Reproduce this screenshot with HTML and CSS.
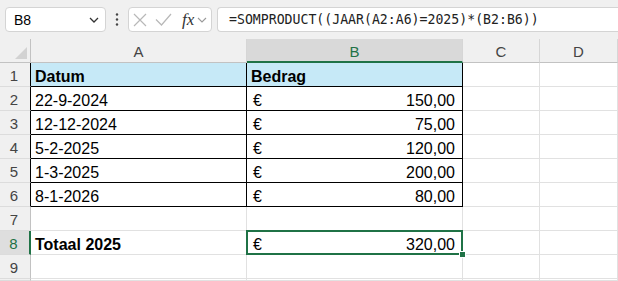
FILE: index.html
```html
<!DOCTYPE html>
<html lang="nl">

<head>
  <meta charset="UTF-8">
  <meta name="viewport" content="width=device-width, initial-scale=1.0">
  <title>SOMPRODUCT</title>
  <link rel="stylesheet" href="styles.css">
</head>

<body>
  <div class="toolbar">
    <div class="namebox">
      <span>B8</span>
      <svg width="10" height="6" viewBox="0 0 10 6"><path d="M1 1l4 4 4-4" fill="none" stroke="#333" stroke-width="1.3"/></svg>
    </div>
    <div class="dots">
      <svg width="4" height="13" viewBox="0 0 4 13"><circle cx="2" cy="1.5" r="1.2" fill="#444"/><circle cx="2" cy="6.5" r="1.2" fill="#444"/><circle cx="2" cy="11.5" r="1.2" fill="#444"/></svg>
    </div>
    <div class="fxbox">
      <svg class="ic-x" width="14" height="14" viewBox="0 0 14 14"><path d="M1 1L13 13M13 1L1 13" fill="none" stroke="#b8b8b8" stroke-width="1.2"/></svg>
      <svg class="ic-ok" width="17" height="13" viewBox="0 0 17 13"><path d="M1 6.5l5.5 5.5L16 1" fill="none" stroke="#b8b8b8" stroke-width="1.2"/></svg>
      <span class="fx">fx</span>
      <svg class="ic-dd" width="10" height="6" viewBox="0 0 10 6"><path d="M1 1l4 4 4-4" fill="none" stroke="#9a9a9a" stroke-width="1.1"/></svg>
    </div>
    <div class="formula">=SOMPRODUCT((JAAR(A2:A6)=2025)*(B2:B6))</div>
  </div>

  <div class="sheet">
    <div class="hd corner"><span class="tri"></span></div>
    <div class="hd">A</div>
    <div class="hd sel">B</div>
    <div class="hd">C</div>
    <div class="hd">D</div>

    <div class="rh tb">1</div>
    <div class="c t head">Datum</div>
    <div class="c t head">Bedrag</div>
    <div class="c"></div>
    <div class="c"></div>

    <div class="rh tb">2</div>
    <div class="c t">22-9-2024</div>
    <div class="c t money"><span>€</span><span>150,00</span></div>
    <div class="c"></div>
    <div class="c"></div>

    <div class="rh tb">3</div>
    <div class="c t">12-12-2024</div>
    <div class="c t money"><span>€</span><span>75,00</span></div>
    <div class="c"></div>
    <div class="c"></div>

    <div class="rh tb">4</div>
    <div class="c t">5-2-2025</div>
    <div class="c t money"><span>€</span><span>120,00</span></div>
    <div class="c"></div>
    <div class="c"></div>

    <div class="rh tb">5</div>
    <div class="c t">1-3-2025</div>
    <div class="c t money"><span>€</span><span>200,00</span></div>
    <div class="c"></div>
    <div class="c"></div>

    <div class="rh tb">6</div>
    <div class="c t">8-1-2026</div>
    <div class="c t money"><span>€</span><span>80,00</span></div>
    <div class="c"></div>
    <div class="c"></div>

    <div class="rh">7</div>
    <div class="c"></div>
    <div class="c"></div>
    <div class="c"></div>
    <div class="c"></div>

    <div class="rh sel">8</div>
    <div class="c bold">Totaal 2025</div>
    <div class="c money active"><span>€</span><span>320,00</span><i class="selbox"></i><i class="handle"></i></div>
    <div class="c"></div>
    <div class="c"></div>

    <div class="rh">9</div>
    <div class="c"></div>
    <div class="c"></div>
    <div class="c"></div>
    <div class="c"></div>

    <div class="rh"></div>
    <div class="c"></div>
    <div class="c"></div>
    <div class="c"></div>
    <div class="c"></div>
  </div>
</body>

</html>
```

FILE: styles.css
```css
* {
  margin: 0;
  padding: 0;
  box-sizing: border-box;
}

body {
  width: 618px;
  height: 281px;
  overflow: hidden;
  background: #fff;
  color: #000;
  font-family: "Liberation Sans", Arial, sans-serif;
}

/* formulebalk */
.toolbar {
  display: flex;
  align-items: flex-start;
  height: 39px;
  padding: 7px 0 0 5px;
  background: #f0f0f0;
}

.namebox {
  display: flex;
  align-items: center;
  justify-content: space-between;
  width: 101px;
  height: 25px;
  padding: 0 6px 0 8px;
  background: #fff;
  border: 1px solid #d4d4d4;
  border-radius: 4px;
  font-size: 14px;
}

.dots {
  display: flex;
  align-items: center;
  justify-content: center;
  width: 22px;
  height: 25px;
}

.fxbox {
  display: flex;
  align-items: center;
  width: 84px;
  height: 25px;
  padding-left: 4px;
  background: #fff;
  border: 1px solid #d4d4d4;
  border-radius: 4px;
}

.ic-ok {
  margin-left: 8px;
}

.fx {
  margin-left: 10px;
  font-family: "Liberation Serif", "DejaVu Serif", serif;
  font-style: italic;
  font-size: 17px;
  color: #333;
}

.ic-dd {
  margin-left: 3px;
}

.formula {
  flex: 1;
  height: 25px;
  margin-left: 5px;
  padding-left: 11px;
  background: #fff;
  border: 1px solid #d4d4d4;
  border-right: none;
  border-radius: 4px 0 0 4px;
  font-family: "DejaVu Sans Mono", "Liberation Mono", monospace;
  font-size: 13.2px;
  line-height: 23px;
  color: #222;
}

/* werkblad */
.sheet {
  display: grid;
  grid-template-columns: 31px 216px 216px 77px 78px;
  grid-template-rows: repeat(10, 24px) 2px;
  overflow: hidden;
}

.hd {
  display: flex;
  align-items: center;
  justify-content: center;
  background: #f0f0f0;
  border-right: 1px solid #d6d6d6;
  border-bottom: 1px solid #c2c2c2;
  color: #444;
  font-size: 15px;
  padding-top: 1px;
}

.hd.sel {
  background: #d9d9d9;
  color: #1f7246;
  border-bottom: 2px solid #1f7246;
  padding-top: 2px;
}

.corner {
  align-items: flex-end;
  justify-content: flex-end;
  padding: 0 3px 3px 0;
  border-right-color: #c2c2c2;
}

.tri {
  width: 0;
  height: 0;
  border-left: 12px solid transparent;
  border-bottom: 12px solid #d2d2d2;
}

.rh {
  display: flex;
  align-items: center;
  justify-content: center;
  padding: 1px 2px 0 0;
  background: #f0f0f0;
  border-right: 1px solid #c2c2c2;
  border-bottom: 1px solid #dcdcdc;
  color: #444;
  font-size: 15px;
}

.rh.tb {
  border-right-color: #000;
}

.rh.sel {
  background: #dedede;
  color: #1f7246;
  border-right: 2px solid #1f7246;
}

.c {
  display: flex;
  align-items: flex-end;
  padding: 0 4px;
  border-right: 1px solid #e1e1e1;
  border-bottom: 1px solid #e1e1e1;
  font-size: 16px;
  white-space: nowrap;
}

.c.t {
  border-right-color: #000;
  border-bottom-color: #000;
}

.c.head,
.c.bold {
  font-weight: bold;
}

.c.head {
  background: #c6e9f7;
}

.money {
  justify-content: space-between;
  padding: 0 7px 0 6px;
}

.active {
  position: relative;
}

.selbox {
  position: absolute;
  top: -1px;
  left: -1px;
  right: -1px;
  bottom: -1px;
  border: 2px solid #1f7246;
}

.handle {
  position: absolute;
  right: -4px;
  bottom: -4px;
  width: 7px;
  height: 7px;
  background: #1f7246;
  border: 1px solid #fff;
}
```
